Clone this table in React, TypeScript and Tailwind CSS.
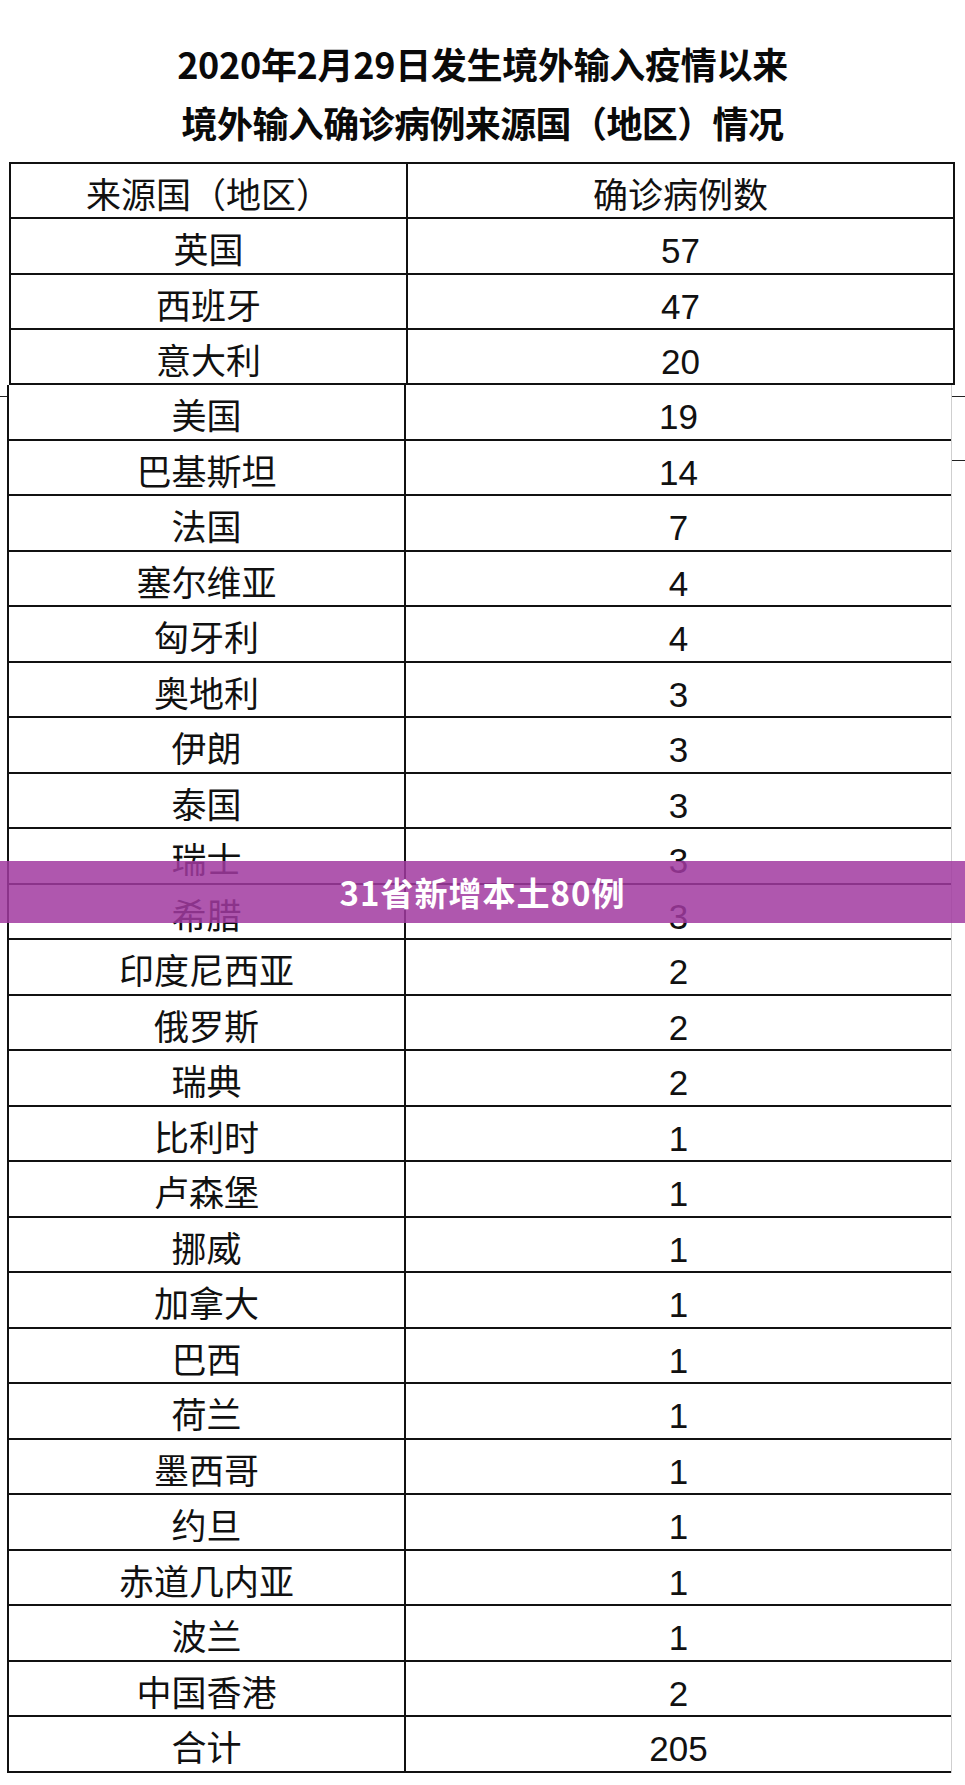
const firstRows = [
  ['英国', '57'],
  ['西班牙', '47'],
  ['意大利', '20'],
];

const restRows = [
  ['美国', '19'],
  ['巴基斯坦', '14'],
  ['法国', '7'],
  ['塞尔维亚', '4'],
  ['匈牙利', '4'],
  ['奥地利', '3'],
  ['伊朗', '3'],
  ['泰国', '3'],
  ['瑞士', '3'],
  ['希腊', '3'],
  ['印度尼西亚', '2'],
  ['俄罗斯', '2'],
  ['瑞典', '2'],
  ['比利时', '1'],
  ['卢森堡', '1'],
  ['挪威', '1'],
  ['加拿大', '1'],
  ['巴西', '1'],
  ['荷兰', '1'],
  ['墨西哥', '1'],
  ['约旦', '1'],
  ['赤道几内亚', '1'],
  ['波兰', '1'],
  ['中国香港', '2'],
  ['合计', '205'],
];

const font = { fontFamily: '"Liberation Sans", "Noto Sans CJK SC", sans-serif' };

function Row({ name, count, first }: { name: string; count: string; first?: boolean }) {
  return (
    <div className={`flex border-b-2 border-[#111] ${first ? 'h-[55.25px]' : 'h-[55.5px]'}`}>
      <div className="w-[397px] shrink-0 border-r-2 border-[#111] flex items-center justify-center pt-[10px] text-[35px] leading-none text-[#111]">
        {name}
      </div>
      <div className="flex-1 flex items-center justify-center pt-[10px] text-[35px] leading-none text-[#111]">
        {count}
      </div>
    </div>
  );
}

export default function App() {
  return (
    <div className="relative w-[965px] h-[1785px] overflow-hidden bg-white" style={font}>
      <div className="h-[162px] flex flex-col items-center pt-[45px] gap-[23px] font-['Noto_Sans_CJK_SC',sans-serif] font-bold text-[36px] leading-none text-[#0a0a0a]">
        <div className="tracking-[-0.3px]">2020年2月29日发生境外输入疫情以来</div>
        <div className="tracking-[-0.6px]">境外输入确诊病例来源国（地区）情况</div>
      </div>

      {/* top sheet */}
      <div className="ml-[9px] w-[946px] border-x-2 border-t-2 border-[#111]">
        <Row name="来源国（地区）" count="确诊病例数" first />
        {firstRows.map(([n, c]) => (
          <Row key={n} name={n} count={c} first />
        ))}
      </div>

      {/* second sheet pasted under it */}
      <div className="relative ml-[7px] w-[945px] border-l-2 border-r border-l-[#111] border-r-[#cfcfcf]">
        <div className="absolute -left-[9px] top-[11px] w-[7px] border-t border-[#222]" />
        <div className="absolute -right-[14px] top-[11px] w-[13px] border-t border-[#222]" />
        <div className="absolute -right-[14px] top-[75px] w-[13px] border-t border-[#222]" />
        {restRows.map(([n, c]) => (
          <Row key={n} name={n} count={c} />
        ))}
      </div>

      <div className="absolute left-0 top-[861px] w-full h-[62px] bg-[rgba(161,58,160,0.85)] flex items-center justify-center">
        <span className="font-['Noto_Sans_CJK_SC',sans-serif] font-bold text-[33px] leading-none text-white tracking-[1px]">
          31省新增本土80例
        </span>
      </div>
    </div>
  );
}
